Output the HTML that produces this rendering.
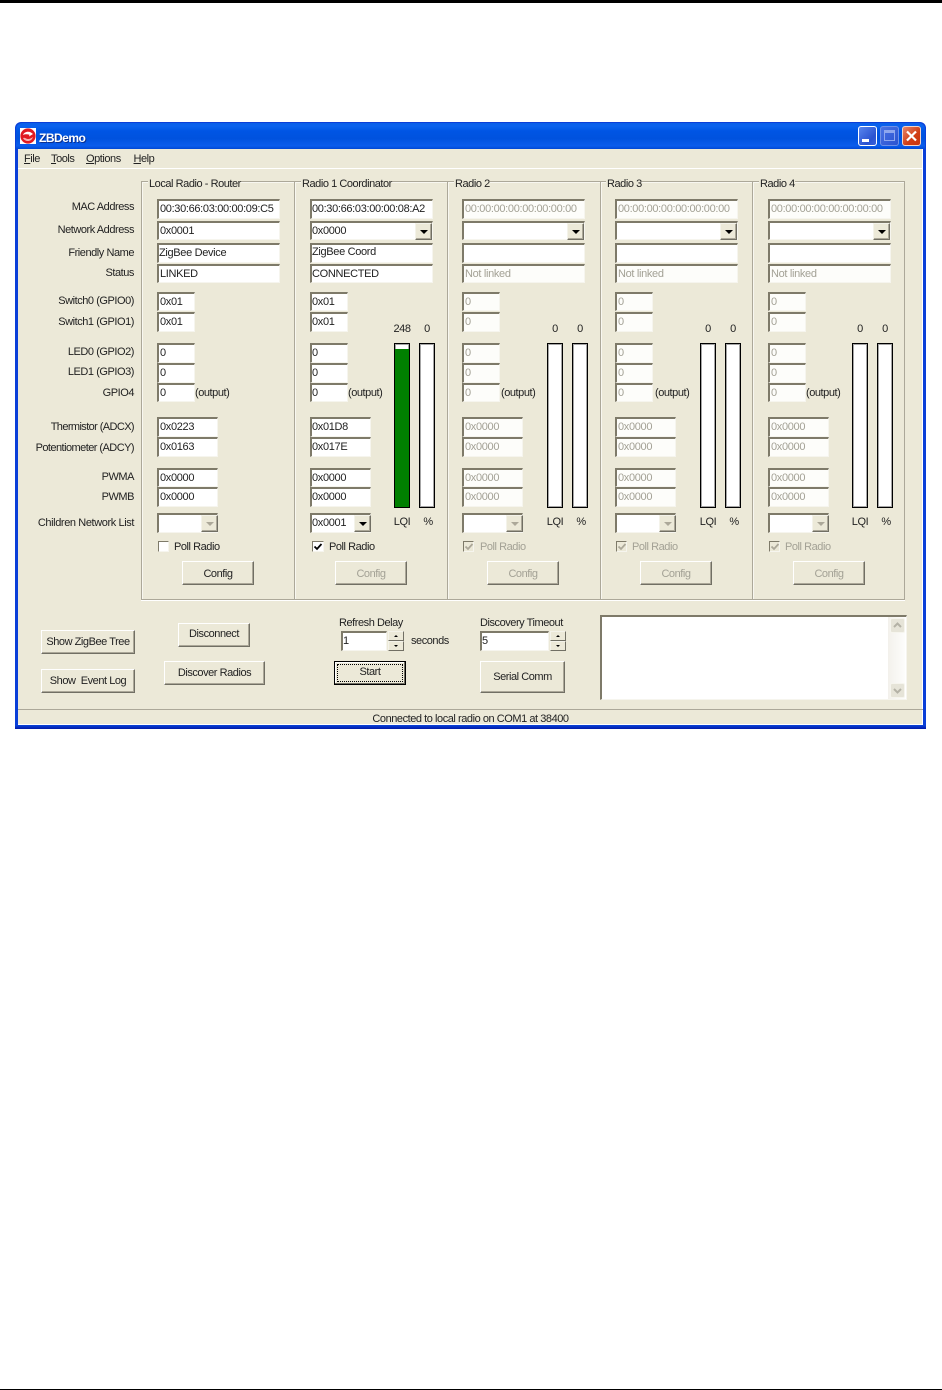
<!DOCTYPE html>
<html><head><meta charset="utf-8"><title>ZBDemo</title>
<style>
html,body{margin:0;padding:0;background:#fff}
body{position:relative;width:942px;height:1390px;overflow:hidden;font:11px/14px "Liberation Sans",sans-serif;letter-spacing:-.45px;color:#222}
div,span.a,svg{position:absolute;box-sizing:border-box}
.t{white-space:nowrap;transform:translateY(1px)}
.l{right:808px;white-space:nowrap;text-align:right;height:14px;transform:translateY(1px)}
.f{background:#fff;border:solid;border-width:2px 1px 1px 2px;border-color:#7e7a69 #f6f5ee #f6f5ee #7e7a69;padding-left:1px;white-space:nowrap;overflow:hidden;line-height:17px;height:20px;left:0;letter-spacing:-.33px}
.d{color:#a3a195;background:#fdfdfa}
.w123{width:123px}.w38{width:38px}.w61{width:61px}
.r1{top:199px;height:20px}.r2{top:221px;height:19px}.r3{top:243px;height:20px}.r4{top:264px;height:19px}
.r5{top:292px;height:19px}.r6{top:312px;height:20px}.r7{top:343px}.r8{top:363px}.r9{top:383px;height:19px}
.r10{top:417px}.r11{top:437px}.r12{top:468px;height:19px}.r13{top:487px}.r14{top:513px}
.col{left:0;top:0;width:150px;height:600px}
.ab{width:17px;height:17px;background:#ece9d8;border:1px solid;border-color:#f4f3ea #716f64 #716f64 #f4f3ea;box-shadow:inset -1px -1px 0 #aca899}
.ab:after{content:"";position:absolute;left:4px;top:6px;border:4px solid transparent;border-bottom:0;border-top:4px solid #000}
.ab.g:after{border-top-color:#aca899}
.btn{background:#ece9d8;border:1px solid;border-color:#fff #716f64 #716f64 #fff;box-shadow:inset -1px -1px 0 #aca899;text-align:center;white-space:nowrap;padding-top:1px}
.cfg{left:25px;top:561px;width:72px;height:24px;line-height:23px}
.ck{left:1px;top:541px;width:11px;height:11px;background:#fff;border:solid;border-width:1px;border-color:#7e7a69 #f6f5ee #f6f5ee #7e7a69}
.ck.dis{background:#ece9d8}
.bar{top:343px;width:16px;height:165px;background:#fff;border:1px solid #000;box-shadow:inset 0 0 0 1px rgba(0,0,0,.35)}
.sp{width:16px;height:10px;background:#ece9d8;border:1px solid;border-color:#f4f3ea #716f64 #716f64 #f4f3ea}
.sp:after{content:"";position:absolute;left:5px;top:3px;border:2px solid transparent}
.u:after{border-top:0;border-bottom:2px solid #000}
.v:after{border-bottom:0;border-top:2px solid #000}
.gr{color:#a3a195}
.frameleg{top:178px;background:#ece9d8;padding:0 0 0 1px;height:13px;line-height:13px;white-space:nowrap}
</style></head><body>
<div style="left:0;top:0;width:942px;height:3px;background:#000"></div>
<div style="left:0;top:1389px;width:942px;height:1px;background:#000"></div>

<div style="left:15px;top:122px;width:911px;height:607px;background:#0a3fd8;border-radius:6px 6px 0 0"></div>
<div style="left:15px;top:725px;width:911px;height:4px;background:linear-gradient(#0a44dc,#0018a8)"></div>
<div style="left:16px;top:123px;width:909px;height:26px;border-radius:6px 6px 0 0;background:linear-gradient(#0a5ee8 0,#0a62ee 3px,#0055e4 8px,#0052de 60%,#0a5cec 88%,#0048d4 100%)"></div>
<svg style="left:20px;top:128px" width="16" height="16" viewBox="0 0 16 16"><rect width="16" height="16" fill="#fff"/><circle cx="8" cy="8" r="7.6" fill="#e01a22"/><path d="M3 7C4 4 8 3 11 4.5L13 6 9 8.5 9.5 6.8C7 6 5 6.2 3 7Z" fill="#fff"/><path d="M3 10c2-1 3 1 5 1s3-.7 5-2c-1 3-3 4-5 4s-4-1-5-3Z" fill="#f8b0b0"/></svg>
<div class="t" style="left:39px;top:130px;color:#fff;font-weight:bold;font-size:12px;letter-spacing:-.5px;text-shadow:1px 1px 0 #0a2f90">ZBDemo</div>
<div style="left:858px;top:126px;width:19px;height:20px;border:1px solid #fff;border-radius:3px;background:linear-gradient(135deg,#5a86ee,#2a52d0 70%,#3a62dc)"></div>
<div style="left:862px;top:139px;width:7px;height:3px;background:#fff"></div>
<div style="left:880px;top:126px;width:19px;height:20px;border:1px solid #6f90e8;border-radius:3px;background:linear-gradient(135deg,#4a72e4,#2a52d0)"></div>
<div style="left:884px;top:130px;width:11px;height:11px;border:1px solid #8ea6ee;border-top-width:3px"></div>
<div style="left:902px;top:126px;width:19px;height:20px;border:1px solid #f3d4c6;border-radius:3px;background:linear-gradient(135deg,#e8866a,#d03c14 60%,#c8340e)"></div>
<svg style="left:902px;top:126px" width="19" height="20" viewBox="0 0 19 20"><path d="M5 5.5L14 14.5M14 5.5L5 14.5" stroke="#fff" stroke-width="2.2" fill="none"/></svg>

<div style="left:18px;top:149px;width:905px;height:576px;background:#ece9d8;border-bottom:1px solid #fff;border-right:1px solid #fff"></div>
<div style="left:18px;top:168px;width:905px;height:1px;background:#fff"></div>
<div class="t" style="left:24px;top:151px"><u>F</u>ile</div>
<div class="t" style="left:51px;top:151px"><u>T</u>ools</div>
<div class="t" style="left:86px;top:151px"><u>O</u>ptions</div>
<div class="t" style="left:133.5px;top:151px"><u>H</u>elp</div>

<div style="left:141px;top:181px;width:764px;height:419px;border:1px solid #aca899;box-shadow:inset 1px 1px 0 #f8f7f0,0 1px 0 #fff"></div>
<div style="left:294px;top:182px;width:2px;height:417px;background:linear-gradient(90deg,#aca899 50%,#f8f7f0 50%)"></div>
<div style="left:447px;top:182px;width:2px;height:417px;background:linear-gradient(90deg,#aca899 50%,#f8f7f0 50%)"></div>
<div style="left:600px;top:182px;width:2px;height:417px;background:linear-gradient(90deg,#aca899 50%,#f8f7f0 50%)"></div>
<div style="left:752px;top:182px;width:2px;height:417px;background:linear-gradient(90deg,#aca899 50%,#f8f7f0 50%)"></div>
<div class="frameleg" style="left:148px">Local Radio - Router</div>
<div class="frameleg" style="left:301px">Radio 1 Coordinator</div>
<div class="frameleg" style="left:454px">Radio 2</div>
<div class="frameleg" style="left:606px">Radio 3</div>
<div class="frameleg" style="left:759px">Radio 4</div>

<div class="l" style="top:199px">MAC Address</div>
<div class="l" style="top:222px">Network Address</div>
<div class="l" style="top:245px">Friendly Name</div>
<div class="l" style="top:265px">Status</div>
<div class="l" style="top:293px">Switch0 (GPIO0)</div>
<div class="l" style="top:314px">Switch1 (GPIO1)</div>
<div class="l" style="top:344px">LED0 (GPIO2)</div>
<div class="l" style="top:364px">LED1 (GPIO3)</div>
<div class="l" style="top:385px">GPIO4</div>
<div class="l" style="top:419px;letter-spacing:-.6px">Thermistor (ADCX)</div>
<div class="l" style="top:440px;letter-spacing:-.55px">Potentiometer (ADCY)</div>
<div class="l" style="top:469px">PWMA</div>
<div class="l" style="top:489px">PWMB</div>
<div class="l" style="top:515px;letter-spacing:-.4px">Children Network List</div>

<!-- Column 1 -->
<div class="col" style="left:157px">
<div class="f w123 r1">00:30:66:03:00:00:09:C5</div>
<div class="f w123 r2">0x0001</div>
<div class="f w123 r3" style="padding-left:0">ZigBee Device</div>
<div class="f w123 r4">LINKED</div>
<div class="f w38 r5">0x01</div><div class="f w38 r6">0x01</div>
<div class="f w38 r7">0</div><div class="f w38 r8">0</div><div class="f w38 r9">0</div>
<div class="t" style="left:38px;top:385px">(output)</div>
<div class="f w61 r10">0x0223</div><div class="f w61 r11">0x0163</div>
<div class="f w61 r12">0x0000</div><div class="f w61 r13">0x0000</div>
<div class="f w61 r14"></div><div class="ab g" style="left:44px;top:515px"></div>
<div class="ck"></div>
<div class="t" style="left:17px;top:539px">Poll Radio</div>
<div class="btn cfg">Config</div>
</div>

<!-- Column 2 -->
<div class="col" style="left:310px">
<div class="f w123 r1" style="padding-left:0">00:30:66:03:00:00:08:A2</div>
<div class="f w123 r2" style="padding-left:0">0x0000</div><div class="ab" style="left:105px;top:223px"></div>
<div class="f w123 r3" style="padding-left:0;line-height:15px">ZigBee Coord</div>
<div class="f w123 r4" style="padding-left:0">CONNECTED</div>
<div class="f w38 r5" style="padding-left:0">0x01</div><div class="f w38 r6" style="padding-left:0">0x01</div>
<div class="f w38 r7" style="padding-left:0">0</div><div class="f w38 r8" style="padding-left:0">0</div><div class="f w38 r9" style="padding-left:0">0</div>
<div class="t" style="left:38px;top:385px">(output)</div>
<div class="f w61 r10" style="padding-left:0">0x01D8</div><div class="f w61 r11" style="padding-left:0">0x017E</div>
<div class="f w61 r12" style="padding-left:0">0x0000</div><div class="f w61 r13" style="padding-left:0">0x0000</div>
<div class="f w61 r14" style="padding-left:0">0x0001</div><div class="ab" style="left:44px;top:515px"></div>
<div class="ck" style="left:2px;width:12px"></div>
<svg style="left:3px;top:542px" width="10" height="10" viewBox="0 0 10 10"><path d="M1.5 4.5L4 7 8.5 2" stroke="#000" stroke-width="1.8" fill="none"/></svg>
<div class="t" style="left:19px;top:539px">Poll Radio</div>
<div class="btn cfg gr">Config</div>
</div>
<div class="t" style="left:385px;top:321px;width:34px;text-align:center">248</div>
<div class="t" style="left:417px;top:321px;width:20px;text-align:center">0</div>
<div class="bar" style="left:394px"><div style="left:0;right:0;bottom:0;top:5px;background:#008000"></div></div>
<div class="bar" style="left:419px"></div>
<div class="t" style="left:385px;top:514px;width:34px;text-align:center">LQI</div>
<div class="t" style="left:418px;top:514px;width:20px;text-align:center">%</div>

<!-- Column 3 -->
<div class="col" style="left:462px">
<div class="f w123 r1 d">00:00:00:00:00:00:00:00</div>
<div class="f w123 r2"></div><div class="ab" style="left:105px;top:223px"></div>
<div class="f w123 r3"></div>
<div class="f w123 r4 d">Not linked</div>
<div class="f w38 r5 d">0</div><div class="f w38 r6 d">0</div>
<div class="f w38 r7 d">0</div><div class="f w38 r8 d">0</div><div class="f w38 r9 d">0</div>
<div class="t" style="left:39px;top:385px">(output)</div>
<div class="f w61 r10 d">0x0000</div><div class="f w61 r11 d">0x0000</div>
<div class="f w61 r12 d">0x0000</div><div class="f w61 r13 d">0x0000</div>
<div class="f w61 r14"></div><div class="ab g" style="left:44px;top:515px"></div>
<div class="ck dis"></div>
<svg style="left:2px;top:542px" width="10" height="10" viewBox="0 0 10 10"><path d="M1.5 4.5L4 7 8.5 2" stroke="#aca899" stroke-width="1.8" fill="none"/></svg>
<div class="t gr" style="left:18px;top:539px">Poll Radio</div>
<div class="btn cfg gr">Config</div>
</div>
<div class="t" style="left:545px;top:321px;width:20px;text-align:center">0</div>
<div class="t" style="left:570px;top:321px;width:20px;text-align:center">0</div>
<div class="bar" style="left:547px"></div><div class="bar" style="left:572px"></div>
<div class="t" style="left:538px;top:514px;width:34px;text-align:center">LQI</div>
<div class="t" style="left:571px;top:514px;width:20px;text-align:center">%</div>

<!-- Column 4 -->
<div class="col" style="left:615px">
<div class="f w123 r1 d">00:00:00:00:00:00:00:00</div>
<div class="f w123 r2"></div><div class="ab" style="left:105px;top:223px"></div>
<div class="f w123 r3"></div>
<div class="f w123 r4 d">Not linked</div>
<div class="f w38 r5 d">0</div><div class="f w38 r6 d">0</div>
<div class="f w38 r7 d">0</div><div class="f w38 r8 d">0</div><div class="f w38 r9 d">0</div>
<div class="t" style="left:40px;top:385px">(output)</div>
<div class="f w61 r10 d">0x0000</div><div class="f w61 r11 d">0x0000</div>
<div class="f w61 r12 d">0x0000</div><div class="f w61 r13 d">0x0000</div>
<div class="f w61 r14"></div><div class="ab g" style="left:44px;top:515px"></div>
<div class="ck dis"></div>
<svg style="left:2px;top:542px" width="10" height="10" viewBox="0 0 10 10"><path d="M1.5 4.5L4 7 8.5 2" stroke="#aca899" stroke-width="1.8" fill="none"/></svg>
<div class="t gr" style="left:17px;top:539px">Poll Radio</div>
<div class="btn cfg gr">Config</div>
</div>
<div class="t" style="left:698px;top:321px;width:20px;text-align:center">0</div>
<div class="t" style="left:723px;top:321px;width:20px;text-align:center">0</div>
<div class="bar" style="left:700px"></div><div class="bar" style="left:725px"></div>
<div class="t" style="left:691px;top:514px;width:34px;text-align:center">LQI</div>
<div class="t" style="left:724px;top:514px;width:20px;text-align:center">%</div>

<!-- Column 5 -->
<div class="col" style="left:768px">
<div class="f w123 r1 d">00:00:00:00:00:00:00:00</div>
<div class="f w123 r2"></div><div class="ab" style="left:105px;top:223px"></div>
<div class="f w123 r3"></div>
<div class="f w123 r4 d">Not linked</div>
<div class="f w38 r5 d">0</div><div class="f w38 r6 d">0</div>
<div class="f w38 r7 d">0</div><div class="f w38 r8 d">0</div><div class="f w38 r9 d">0</div>
<div class="t" style="left:38px;top:385px">(output)</div>
<div class="f w61 r10 d">0x0000</div><div class="f w61 r11 d">0x0000</div>
<div class="f w61 r12 d">0x0000</div><div class="f w61 r13 d">0x0000</div>
<div class="f w61 r14"></div><div class="ab g" style="left:44px;top:515px"></div>
<div class="ck dis"></div>
<svg style="left:2px;top:542px" width="10" height="10" viewBox="0 0 10 10"><path d="M1.5 4.5L4 7 8.5 2" stroke="#aca899" stroke-width="1.8" fill="none"/></svg>
<div class="t gr" style="left:17px;top:539px">Poll Radio</div>
<div class="btn cfg gr">Config</div>
</div>
<div class="t" style="left:850px;top:321px;width:20px;text-align:center">0</div>
<div class="t" style="left:875px;top:321px;width:20px;text-align:center">0</div>
<div class="bar" style="left:852px"></div><div class="bar" style="left:877px"></div>
<div class="t" style="left:843px;top:514px;width:34px;text-align:center">LQI</div>
<div class="t" style="left:876px;top:514px;width:20px;text-align:center">%</div>

<!-- Bottom controls -->
<div class="btn" style="left:41px;top:630px;width:94px;height:24px;line-height:21px">Show ZigBee Tree</div>
<div class="btn" style="left:41px;top:669px;width:94px;height:24px;line-height:21px">Show&nbsp; Event Log</div>
<div class="btn" style="left:178px;top:623px;width:72px;height:24px;line-height:19px">Disconnect</div>
<div class="btn" style="left:164px;top:661px;width:101px;height:24px;line-height:21px">Discover Radios</div>
<div class="t" style="left:339px;top:615px">Refresh Delay</div>
<div class="f" style="left:341px;top:631px;width:46px;padding-left:0">1</div>
<div class="sp u" style="left:388px;top:631px"></div>
<div class="sp v" style="left:388px;top:641px"></div>
<div class="t" style="left:411px;top:633px">seconds</div>
<div class="btn" style="left:334px;top:661px;width:72px;height:24px;line-height:19px;border:1px solid #000;box-shadow:inset -1px -1px 0 #716f64,inset 1px 1px 0 #fff">Start</div>
<div style="left:337px;top:664px;width:66px;height:18px;border:1px dotted #000"></div>
<div class="t" style="left:480px;top:615px">Discovery Timeout</div>
<div class="f" style="left:480px;top:631px;width:69px;padding-left:0">5</div>
<div class="sp u" style="left:550px;top:631px"></div>
<div class="sp v" style="left:550px;top:641px"></div>
<div class="btn" style="left:480px;top:661px;width:85px;height:32px;line-height:28px">Serial Comm</div>

<div class="f" style="left:600px;top:615px;width:307px;height:85px"></div>
<div style="left:888px;top:617px;width:17px;height:82px;background:linear-gradient(90deg,#f3f1ec,#fdfdfb)"></div>
<div style="left:890px;top:618px;width:15px;height:15px;background:#e6e4d8;border:1px solid #f6f5ee;border-radius:2px"></div>
<div style="left:890px;top:683px;width:15px;height:15px;background:#e6e4d8;border:1px solid #f6f5ee;border-radius:2px"></div>
<svg style="left:890px;top:618px" width="15" height="15" viewBox="0 0 15 15"><path d="M4 9L7.5 5.5 11 9" stroke="#b4b2a6" stroke-width="2" fill="none"/></svg>
<svg style="left:890px;top:683px" width="15" height="15" viewBox="0 0 15 15"><path d="M4 6L7.5 9.5 11 6" stroke="#b4b2a6" stroke-width="2" fill="none"/></svg>

<div style="left:18px;top:709px;width:905px;height:1px;background:#aca899"></div>
<div class="t" style="left:18px;top:711px;width:905px;text-align:center">Connected to local radio on COM1 at 38400</div>
</body></html>
